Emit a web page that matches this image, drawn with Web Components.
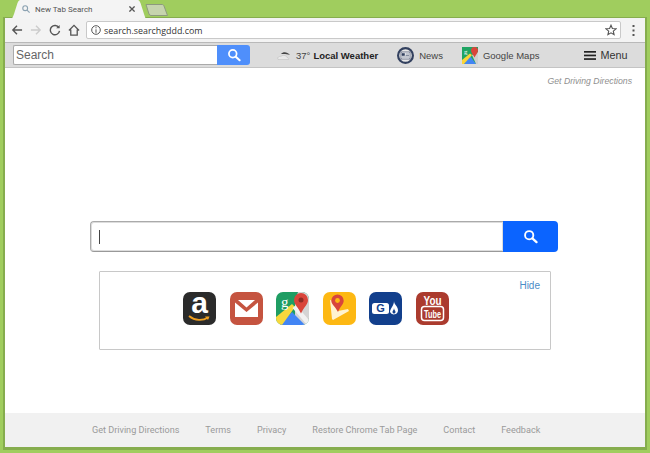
<!DOCTYPE html>
<html>
<head>
<meta charset="utf-8">
<title>New Tab Search</title>
<style>
  html, body { margin: 0; padding: 0; }
  body { width: 650px; height: 453px; overflow: hidden; font-family: "Liberation Sans", Arial, sans-serif; }
</style>
</head>
<body>
<browser-window>
  <tab-strip slot="tabs" title-text="New Tab Search"></tab-strip>
  <nav-toolbar slot="toolbar" url="search.searchgddd.com"></nav-toolbar>
  <search-bar slot="bar"></search-bar>
  <new-tab-page slot="page"></new-tab-page>
</browser-window>

<script>
// small helper so each component only has to declare styles + markup
class Base extends HTMLElement {
  constructor() {
    super();
    this.attachShadow({ mode: 'open' });
  }
  connectedCallback() {
    this.shadowRoot.innerHTML = `<style>${this.styles()}</style>${this.markup()}`;
  }
  styles() { return ''; }
  markup() { return ''; }
}

const SEARCH_ICON = `<svg viewBox="0 0 16 16" fill="none" stroke="#fff"><circle cx="6.6" cy="6.6" r="4.4" stroke-width="2"/><path d="M10 10l4.4 4" stroke-width="2.4" stroke-linecap="round"/></svg>`;

class BrowserWindow extends Base {
  styles() {
    return `
      :host { display: block; width: 650px; height: 453px; box-sizing: border-box; background: #a0cd5e; }
      .frame { display: flex; flex-direction: column; height: 453px; box-sizing: border-box; padding: 0 5px 6px 5px; }
      .edge { flex: 1; display: flex; flex-direction: column; min-height: 0; box-shadow: 0 0 0 1px #86ad4e, 0 1px 0 2px #86ad4e; background: #fff; }
    `;
  }
  markup() {
    return `<div class="frame">
      <slot name="tabs"></slot>
      <div class="edge">
        <slot name="toolbar"></slot>
        <slot name="bar"></slot>
        <slot name="page"></slot>
      </div>
    </div>`;
  }
}

class TabStrip extends Base {
  styles() {
    return `
      :host { display: block; height: 18px; position: relative; z-index: 1; }
      .strip { display: flex; height: 18px; align-items: flex-start; padding-left: 5px; }
      .tab { position: relative; width: 137px; height: 19px; display: flex; align-items: center; box-sizing: border-box; padding: 0 12px 1px 12px; flex: none; }
      .tab > svg.bg { position: absolute; inset: 0; }
      .tab > * { position: relative; }
      .fav { width: 8px; height: 8px; margin-right: 5px; flex: none; }
      .title { flex: 1; font: 8px Roboto, "Liberation Sans", sans-serif; color: #555; white-space: nowrap; }
      .close { width: 6px; height: 6px; flex: none; }
      .newtab { width: 24px; height: 12px; margin: 4px 0 0 -2px; flex: none; }
    `;
  }
  markup() {
    return `<div class="strip">
      <div class="tab">
        <svg class="bg" width="137" height="19" viewBox="0 0 137 19"><path d="M0 19C2 19 3 17 4 14L7.500 3C8.500 .5 9.500 0 11 0H127C128.500 0 129.500 .5 130.500 3L134 14C135 17 135.500 19 137 19Z" fill="#f4f4f4"/></svg>
        <svg class="fav" viewBox="0 0 10 10" fill="none" stroke="#8aa1b1" stroke-width="1.400"><circle cx="4" cy="4" r="3"/><path d="M6.300 6.300L9.500 9.500"/></svg>
        <span class="title">${this.getAttribute('title-text')}</span>
        <svg class="close" viewBox="0 0 7 7" stroke="#555" stroke-width="1.500"><path d="M.5 .5l6 6M6.500 .5l-6 6"/></svg>
      </div>
      <svg class="newtab" viewBox="0 0 24 12"><path d="M1 .5H17C18 .5 18.500 1 19 2L22.500 11.500H6C5 11.500 4.500 11 4 10Z" fill="#c6d4ae" stroke="#8d9a7e"/></svg>
    </div>`;
  }
}

class NavToolbar extends Base {
  styles() {
    return `
      :host { display: block; }
      .bar { display: flex; align-items: center; height: 24px; background: #f3f3f3; box-sizing: border-box; padding: 0 0 0 2.500px; }
      .btn { width: 19px; height: 16px; display: flex; align-items: center; justify-content: center; flex: none; }
      .btn svg { width: 12px; height: 12px; }
      .omni { width: 535px; height: 18px; margin-left: 2.500px; box-sizing: border-box; background: #fff; border: 1px solid #c9c9c9; border-radius: 2px; display: flex; align-items: center; padding: 0 3px 0 4px; flex: none; }
      .info { width: 10px; height: 10px; margin-right: 3px; flex: none; }
      .url { flex: 1; font: 8.9px "Open Sans", "Noto Sans", sans-serif; color: #333; white-space: nowrap; }
      .star { width: 12px; height: 12px; flex: none; }
      .more { width: 24px; display: flex; justify-content: center; }
      .more svg { width: 3px; height: 11px; }
    `;
  }
  markup() {
    return `<div class="bar">
      <span class="btn"><svg viewBox="0 0 13 13" fill="none" stroke="#555" stroke-width="1.500"><path d="M12 6.500H2M6.500 2L2 6.500 6.500 11"/></svg></span>
      <span class="btn"><svg viewBox="0 0 13 13" fill="none" stroke="#ccc" stroke-width="1.500"><path d="M1 6.500H11M6.500 2L11 6.500 6.500 11"/></svg></span>
      <span class="btn"><svg viewBox="0 0 13 13" fill="none" stroke="#555" stroke-width="1.500"><path d="M10.700 4A5 5 0 1 0 11.400 7.500"/><path d="M11.500 1L11.500 4.700 7.800 4.700Z" fill="#555" stroke="none"/></svg></span>
      <span class="btn"><svg viewBox="0 0 13 13" fill="none" stroke="#555" stroke-width="1.400"><path d="M1 7L6.500 1.500 12 7M3 6V12H10V6"/></svg></span>
      <div class="omni">
        <svg class="info" viewBox="0 0 10 10" fill="none" stroke="#555"><circle cx="5" cy="5" r="4.300"/><path d="M5 4.300V7.800M5 2.200V3.300"/></svg>
        <span class="url">${this.getAttribute('url')}</span>
        <svg class="star" viewBox="0 0 12 12" fill="none" stroke="#555" stroke-width="1.100"><path d="M6 1.200L7.400 4.500 11 4.800 8.300 7.100 9.100 10.700 6 8.800 2.900 10.700 3.700 7.100 1 4.800 4.600 4.500Z"/></svg>
      </div>
      <span class="more"><svg viewBox="0 0 3 11" fill="#555"><rect x=".5" y="0" width="2" height="2"/><rect x=".5" y="4.500" width="2" height="2"/><rect x=".5" y="9" width="2" height="2"/></svg></span>
    </div>`;
  }
}

class SearchBar extends Base {
  styles() {
    return `
      :host { display: block; }
      .bar { display: flex; align-items: center; height: 26px; box-sizing: border-box; background: #dcdcdc; border-top: 1px solid #b9b9b9; border-bottom: 1px solid #c4c4c4; padding-left: 8px; color: #444; font-size: 9.500px; white-space: nowrap; }
      .q { width: 204px; height: 20px; box-sizing: border-box; background: #fff; border: 1px solid #aaa; border-right: 0; border-radius: 2px 0 0 2px; font-size: 12px; color: #666; line-height: 18px; padding-left: 2px; flex: none; }
      .go { width: 33px; height: 20px; background: #4f8ffb; border-radius: 0 3px 3px 0; display: flex; align-items: center; justify-content: center; flex: none; }
      .go svg { width: 14px; height: 14px; }
      .item { display: flex; align-items: center; flex: none; }
      .weather { margin-left: 27px; }
      .weather svg { width: 14px; height: 9px; margin-right: 5px; }
      .weather b { margin-left: 3px; color: #222; }
      .news { margin-left: 19px; }
      .news svg { width: 17px; height: 17px; margin-right: 5px; }
      .maps { margin-left: 19.500px; }
      .maps svg { width: 16px; height: 17px; margin-right: 4.500px; }
      .menu { margin-left: 45px; font-size: 10.800px; color: #333; }
      .menu svg { width: 12px; height: 9px; margin-right: 4px; }
    `;
  }
  markup() {
    return `<div class="bar">
      <div class="q">Search</div>
      <div class="go">${SEARCH_ICON}</div>
      <span class="item weather"><svg viewBox="0 0 14 9"><path d="M4 3C6 .5 10 .5 13 4 9 2.500 6 3 4 3Z" fill="#444"/><path d="M1 8.500C0 6.500 2 5 4 5.500 6 3.500 9.500 4.500 10 6.500 11.500 6.500 12 8 11.500 8.500Z" fill="#e9e9e9" stroke="#bbb" stroke-width=".5"/></svg>37°<b>Local Weather</b></span>
      <span class="item news"><svg viewBox="0 0 17 17"><circle cx="8.500" cy="8.500" r="7.400" fill="#e8e8e8" stroke="#33415f" stroke-width="2.200"/><path d="M4 5H13V12H4Z" fill="#fff" stroke="#33415f" stroke-width=".7"/><path d="M5 6.500H7.500V8.500H5ZM8.500 7H12M8.500 8.500H12M5 10H12" fill="#33415f" stroke="#33415f" stroke-width=".6"/></svg>News</span>
      <span class="item maps"><svg viewBox="0 0 16 17"><rect width="16" height="17" fill="#1fa463"/><path d="M2 17L8 9 14 17Z" fill="#4285f4"/><path d="M0 13L8 6.500 10 8 2 17H0Z" fill="#fbd437"/><path d="M10 8L16 5V17H14Z" fill="#cfcfcf"/><path d="M12.500 0A3.500 3.500 0 0 1 16 3.500C16 6 13.500 8 12.500 10.500 11.500 8 9 6 9 3.500A3.500 3.500 0 0 1 12.500 0Z" fill="#d9453a"/><text x="2" y="7" font-family="Liberation Serif, serif" font-size="7" fill="#fff">g</text></svg>Google Maps</span>
      <span class="item menu"><svg viewBox="0 0 12 9" fill="#222"><rect width="12" height="1.700"/><rect y="3.600" width="12" height="1.700"/><rect y="7.200" width="12" height="1.700"/></svg>Menu</span>
    </div>`;
  }
}

class NewTabPage extends Base {
  styles() {
    return `
      :host { display: block; flex: 1; }
      .page { height: 379px; display: flex; flex-direction: column; background: #fff; }
      .top { display: flex; justify-content: flex-end; padding: 7px 13px 0 0; height: 153px; box-sizing: border-box; font: italic 8.700px/13px "Liberation Sans", Arial, sans-serif; color: #8f8f8f; flex: none; }
      main-search { margin-left: 85px; }
      tile-panel { margin: 19px 0 0 94px; }
      page-footer { margin-top: auto; }
    `;
  }
  markup() {
    return `<div class="page">
      <div class="top">Get Driving Directions</div>
      <main-search></main-search>
      <tile-panel></tile-panel>
      <page-footer></page-footer>
    </div>`;
  }
}

class MainSearch extends Base {
  styles() {
    return `
      :host { display: block; width: 468px; }
      .wrap { display: flex; height: 31px; }
      .field { flex: 1; box-sizing: border-box; background: #fff; border: 1px solid #aaa; border-right: 0; border-bottom-color: #999; border-radius: 4px 0 0 4px; display: flex; align-items: center; padding-left: 8px; box-shadow: inset 0 0 0 1px #ddd; }
      .caret { width: 1px; height: 14px; background: #444; }
      .go { width: 55px; background: #0b64ff; border-radius: 0 4px 4px 0; display: flex; align-items: center; justify-content: center; flex: none; }
      .go svg { width: 15px; height: 15px; }
    `;
  }
  markup() {
    return `<div class="wrap"><div class="field"><span class="caret"></span></div><div class="go">${SEARCH_ICON}</div></div>`;
  }
}

class AppTile extends Base {
  styles() {
    return `
      :host { display: block; width: 33px; height: 33px; flex: none; }
      .t { width: 33px; height: 33px; }
    `;
  }
  markup() {
    return `<div class="t"><slot></slot></div>`;
  }
}

class TilePanel extends Base {
  styles() {
    return `
      :host { display: block; width: 452px; }
      .box { position: relative; height: 79px; box-sizing: border-box; border: 1px solid #c8c8c8; border-radius: 1px; display: flex; padding: 20px 0 0 83px; gap: 13.500px; }
      .hide { position: absolute; top: 7px; right: 10px; font-size: 10px; line-height: 13px; color: #4a8cc7; }
      svg { display: block; width: 33px; height: 33px; overflow: visible; }
    `;
  }
  markup() {
    return `<div class="box">
      <span class="hide">Hide</span>
      <app-tile><svg viewBox="0 0 33 33"><rect width="33" height="33" rx="7" fill="#2b2b2b"/><text x="16.500" y="21" text-anchor="middle" font-family="Liberation Sans, sans-serif" font-weight="700" font-size="30" fill="#fff">a</text><path d="M6 24C12 29 20 29 25 25.500" fill="none" stroke="#f0a020" stroke-width="1.800"/><path d="M22 24.500L26.500 24.500 25 28Z" fill="#f0a020"/></svg></app-tile>
      <app-tile><svg viewBox="0 0 33 33"><rect width="33" height="33" rx="7" fill="#c55440"/><path d="M5 8H28V25H5Z" fill="#fff"/><path d="M5 8H8L16.500 15.500 25 8H28V10.500L16.500 20 5 10.500Z" fill="#c55440"/></svg></app-tile>
      <app-tile><svg viewBox="0 0 33 33"><defs><clipPath id="mc"><rect width="33" height="33" rx="7"/></clipPath></defs><g clip-path="url(#mc)"><rect width="33" height="33" fill="#1f9d63"/><path d="M19 0H33V33H19Z" fill="#d4d4d4"/><path d="M19 0H22L19 10Z" fill="#1f9d63"/><path d="M4 33L16 20 29 33Z" fill="#4285f4"/><path d="M0 25L16 12 19 15 6 33H0Z" fill="#f8d83c"/><path d="M16.500 16L20 13 33 28V33H31Z" fill="#f1f1f1"/><path d="M25 1A7 7 0 0 1 32 8C32 12.500 27.500 15.500 25 21.500 22.500 15.500 18 12.500 18 8A7 7 0 0 1 25 1Z" fill="#d9453a"/><circle cx="25" cy="8" r="2.500" fill="#8e2b24"/></g><text x="5" y="15" font-family="Liberation Serif, serif" font-size="15" fill="#fff">g</text></svg></app-tile>
      <app-tile><svg viewBox="0 0 33 33"><rect width="33" height="33" rx="7" fill="#fdb813"/><path d="M7 8L13 10 15 19 25 17 26 19 10 28 9 27Z" fill="#fff3d0"/><path d="M14.500 2.500A6.200 6.200 0 0 1 20.700 8.700C20.700 12.500 17 14.500 15 20 12.500 14.500 8.300 12.500 8.300 8.700A6.200 6.200 0 0 1 14.500 2.500Z" fill="#d8453c"/><circle cx="14.500" cy="8.500" r="2.400" fill="#fdb813"/></svg></app-tile>
      <app-tile><svg viewBox="0 0 33 33"><rect width="33" height="33" rx="7" fill="#123f8c"/><rect x="3" y="11" width="17" height="11" rx="2.500" fill="#fff"/><text x="11.500" y="20.200" text-anchor="middle" font-family="Liberation Sans, sans-serif" font-weight="700" font-size="11" fill="#123f8c">G</text><path d="M25 9C25 13 29 14 29 18.500A4.200 4.200 0 0 1 21 20C21 16.500 25 14 25 9Z" fill="#fff"/><path d="M25 16C25 18 26.500 18.500 26.500 20A1.500 1.500 0 0 1 23.500 20C23.500 18.500 25 18 25 16Z" fill="#123f8c"/></svg></app-tile>
      <app-tile><svg viewBox="0 0 33 33"><rect width="33" height="33" rx="7" fill="#ab3b2e"/><text x="16.500" y="13" text-anchor="middle" font-family="Liberation Sans, sans-serif" font-weight="700" font-size="13" fill="#fff" textLength="18" lengthAdjust="spacingAndGlyphs">You</text><rect x="5.500" y="14.500" width="22" height="14" rx="3" fill="none" stroke="#fff" stroke-width="1.500"/><text x="16.500" y="26" text-anchor="middle" font-family="Liberation Sans, sans-serif" font-weight="700" font-size="11" fill="#fff" textLength="17" lengthAdjust="spacingAndGlyphs">Tube</text></svg></app-tile>
    </div>`;
  }
}

class PageFooter extends Base {
  styles() {
    return `
      :host { display: block; }
      .foot { height: 34px; background: #f1f1f1; display: flex; align-items: center; gap: 26px; padding-left: 87px; font: 9.100px/13px Roboto, "Liberation Sans", sans-serif; color: #9a9a9a; white-space: nowrap; }
    `;
  }
  markup() {
    const links = ['Get Driving Directions', 'Terms', 'Privacy', 'Restore Chrome Tab Page', 'Contact', 'Feedback'];
    return `<div class="foot">${links.map(l => `<span>${l}</span>`).join('')}</div>`;
  }
}

customElements.define('browser-window', BrowserWindow);
customElements.define('tab-strip', TabStrip);
customElements.define('nav-toolbar', NavToolbar);
customElements.define('search-bar', SearchBar);
customElements.define('new-tab-page', NewTabPage);
customElements.define('main-search', MainSearch);
customElements.define('app-tile', AppTile);
customElements.define('tile-panel', TilePanel);
customElements.define('page-footer', PageFooter);
</script>
</body>
</html>
